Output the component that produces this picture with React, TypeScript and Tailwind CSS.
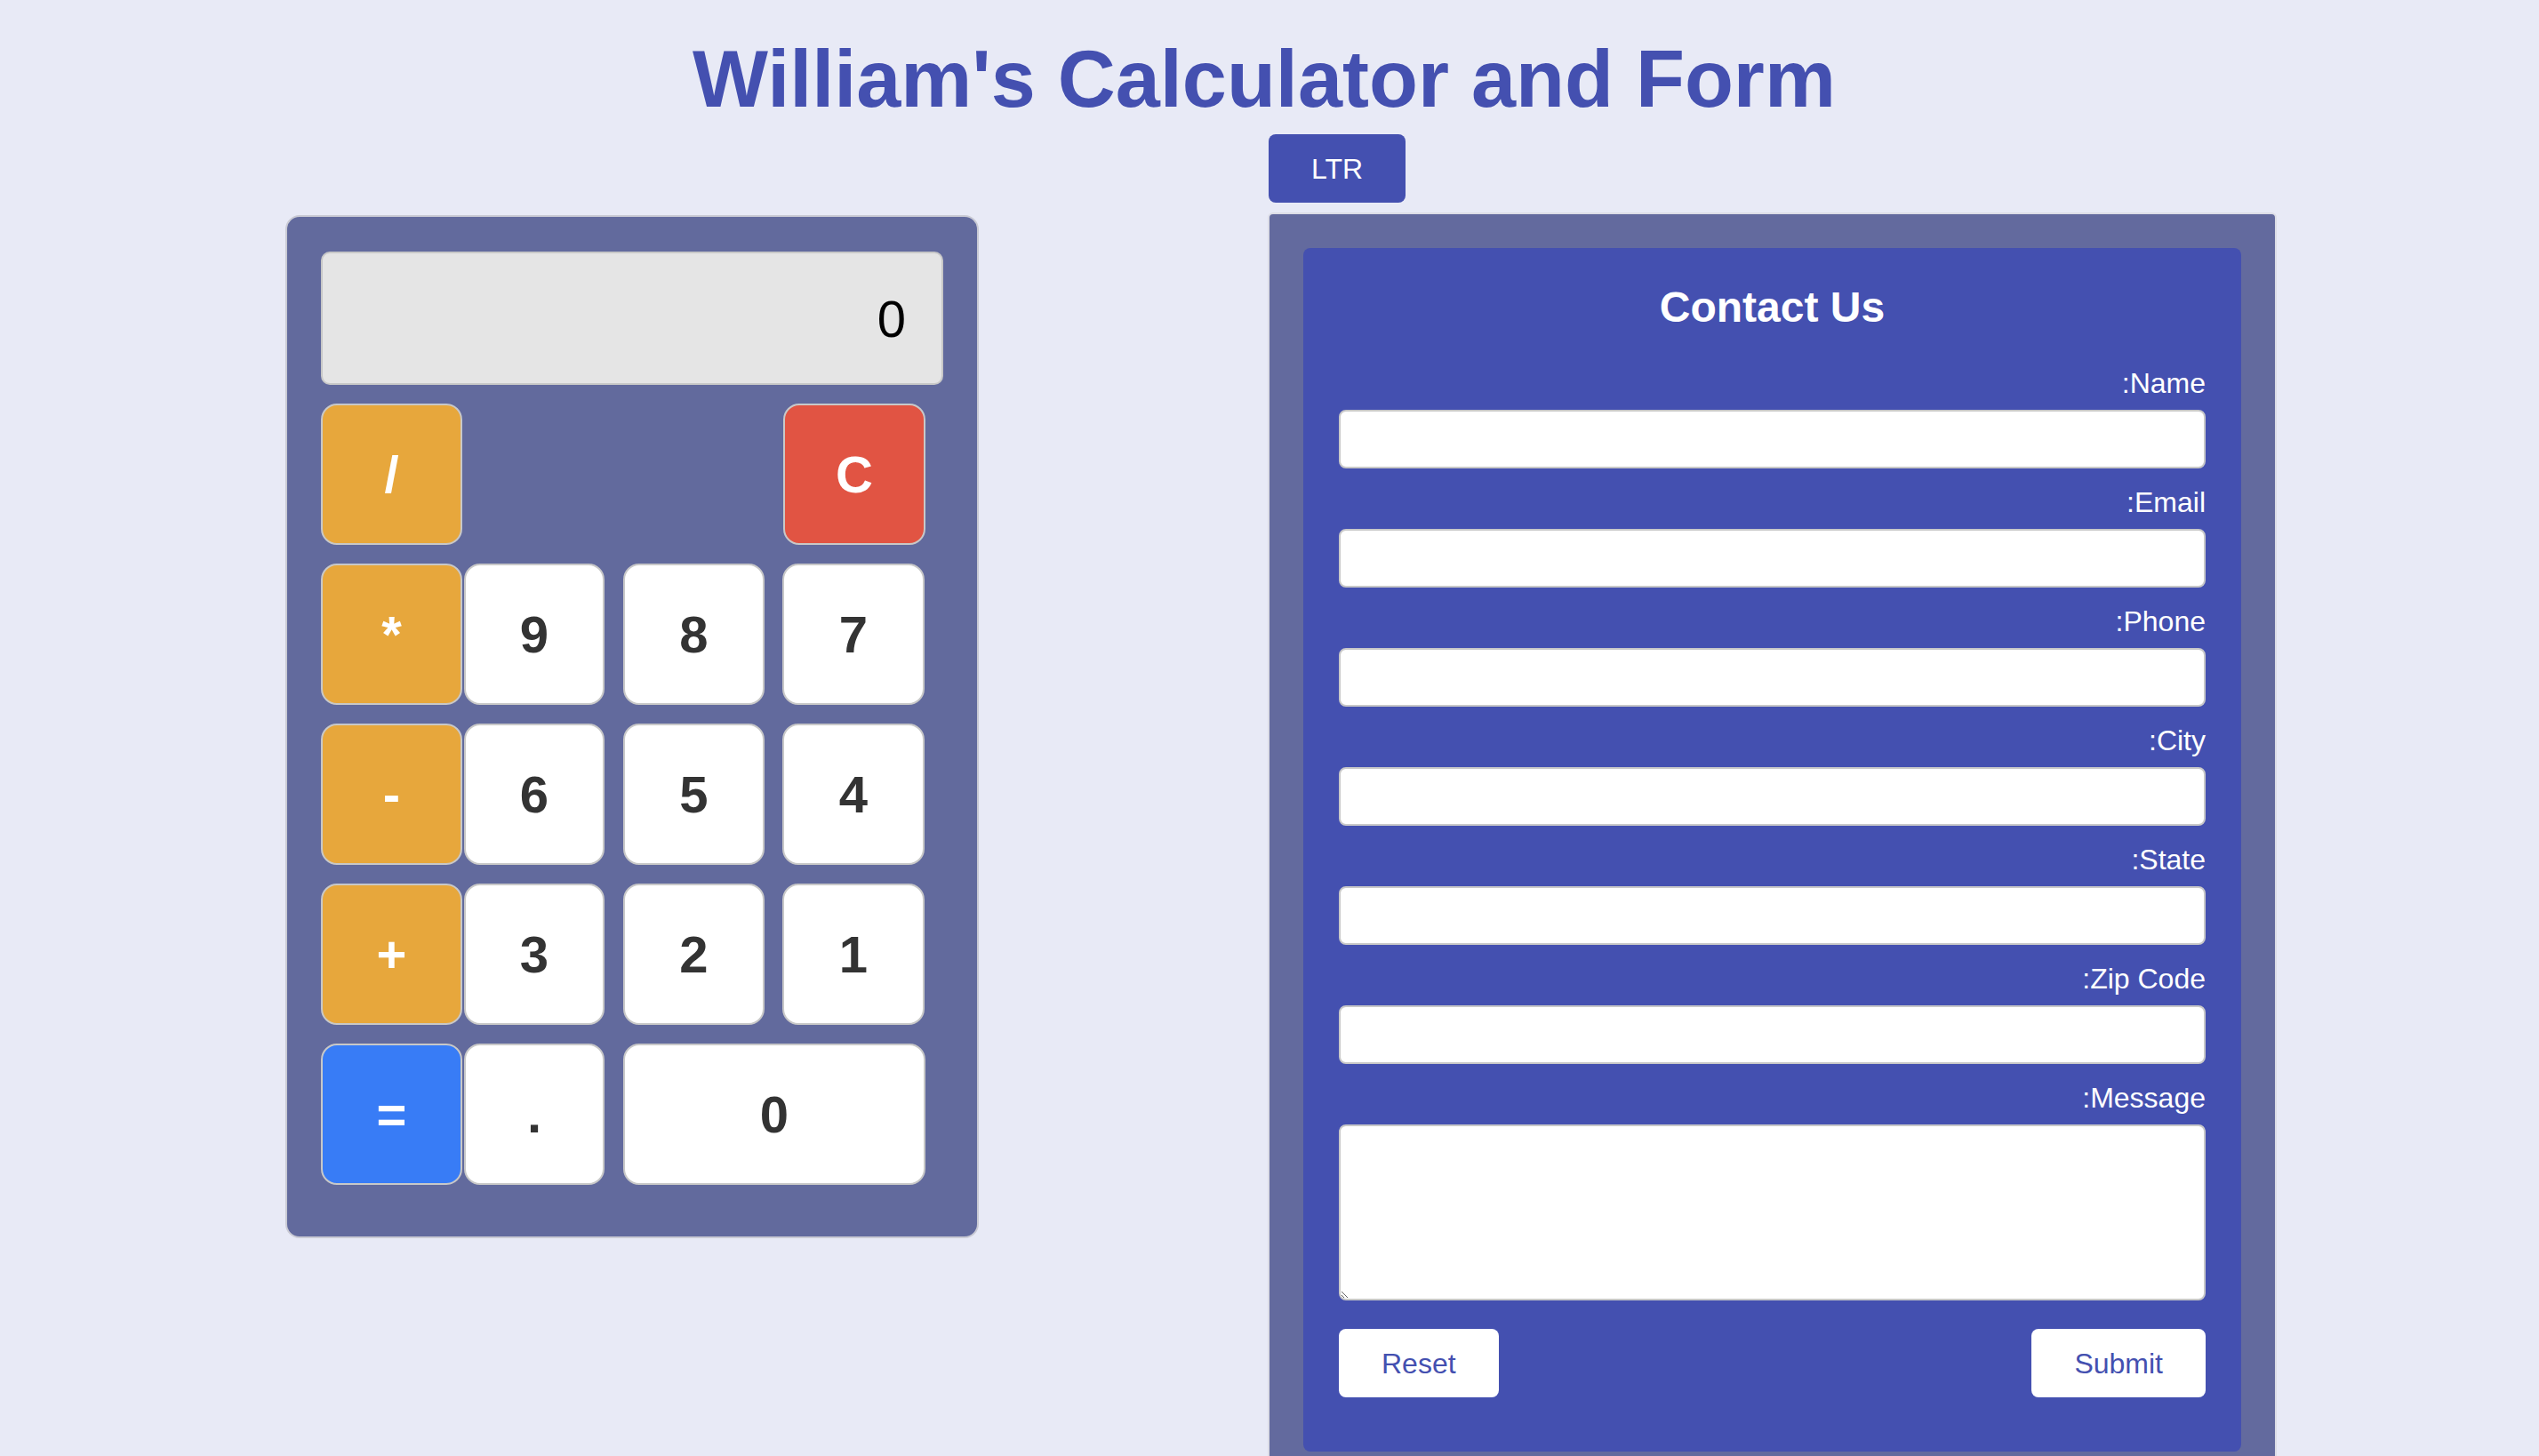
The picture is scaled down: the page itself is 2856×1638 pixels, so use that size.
import React from "react"

const opKey = "bg-[#e7a73c] text-white"
const numKey = "bg-white text-[#333333]"

function Key({ label, className }: { label: string; className: string }) {
  return (
    <button
      className={`h-[159px] shrink-0 rounded-[18px] border-2 border-[#c8c8c8] flex items-center justify-center text-[58px] font-bold ${className}`}
    >
      {label}
    </button>
  )
}

function Calculator() {
  const rows = [
    ["*", "9", "8", "7"],
    ["-", "6", "5", "4"],
    ["+", "3", "2", "1"],
  ]

  return (
    <div className="w-[780px] rounded-[16px] border-2 border-[#c9cad4] bg-[#626a9d] px-[38px] pt-[39px] pb-[58px]">
      <div className="h-[150px] w-full rounded-[10px] border-2 border-[#c8c8c8] bg-[#e5e5e5] flex items-center justify-end pr-[40px] text-[58px] text-black">
        0
      </div>

      <div className="mt-[21px] flex">
        <Key label="/" className={`w-[159px] ${opKey}`} />
        <Key label="C" className="ml-[361px] w-[160px] bg-[#e15443] text-white" />
      </div>

      {rows.map((row) => (
        <div key={row[0]} className="mt-[21px] flex">
          <Key label={row[0]} className={`w-[159px] ${opKey}`} />
          <Key label={row[1]} className={`ml-[2px] w-[158px] ${numKey}`} />
          <Key label={row[2]} className={`ml-[21px] w-[159px] ${numKey}`} />
          <Key label={row[3]} className={`ml-[20px] w-[160px] ${numKey}`} />
        </div>
      ))}

      <div className="mt-[21px] flex">
        <Key label="=" className="w-[159px] bg-[#387cf6] text-white" />
        <Key label="." className={`ml-[2px] w-[158px] ${numKey}`} />
        <Key label="0" className={`ml-[21px] w-[340px] ${numKey}`} />
      </div>
    </div>
  )
}

const fields = ["Name", "Email", "Phone", "City", "State", "Zip Code"]

function ContactForm() {
  return (
    <div className="w-[1135px] rounded-[6px] border-2 border-[#dcdde6] bg-[#636a9e] p-[38px]">
      <form dir="rtl" className="rounded-[8px] bg-[#4450b0] px-[40px] pt-[39px] pb-[61px]">
        <h2 className="mb-[40px] text-center text-[48px] leading-[55px] font-bold text-white">
          Contact Us
        </h2>

        {fields.map((f) => (
          <div key={f} className="mb-[20px]">
            <label className="mb-[12px] block text-[32px] leading-[36px] text-white">{f}:</label>
            <input
              type="text"
              className="block h-[66px] w-full rounded-[8px] border-2 border-[#c8c8c8] bg-white"
            />
          </div>
        ))}

        <div>
          <label className="mb-[12px] block text-[32px] leading-[36px] text-white">Message:</label>
          <textarea className="block h-[198px] w-full rounded-[8px] border-2 border-[#c8c8c8] bg-white" />
        </div>

        <div className="mt-[32px] flex justify-between">
          <button type="submit" className="h-[77px] rounded-[8px] bg-white px-[48px] text-[32px] text-[#4450b0]">
            Submit
          </button>
          <button type="reset" className="h-[77px] rounded-[8px] bg-white px-[48px] text-[32px] text-[#4450b0]">
            Reset
          </button>
        </div>
      </form>
    </div>
  )
}

export default function App() {
  return (
    <div className="min-h-screen bg-[#e8eaf6] pb-[40px] font-['Liberation_Sans',Arial,sans-serif]">
      <h1 className="pt-[44px] pr-[12px] text-center text-[90px] leading-[90px] font-bold text-[#4450b0]">
        William's Calculator and Form
      </h1>

      <div className="mt-[17px] flex items-start">
        <div className="w-[1426px] shrink-0 pl-[321px] pt-[91px]">
          <Calculator />
        </div>

        <div className="flex flex-col items-start">
          <button className="ml-[1px] h-[77px] w-[154px] rounded-[8px] bg-[#4450b0] text-[32px] text-white">
            LTR
          </button>
          <div className="mt-[11px]">
            <ContactForm />
          </div>
        </div>
      </div>
    </div>
  )
}
